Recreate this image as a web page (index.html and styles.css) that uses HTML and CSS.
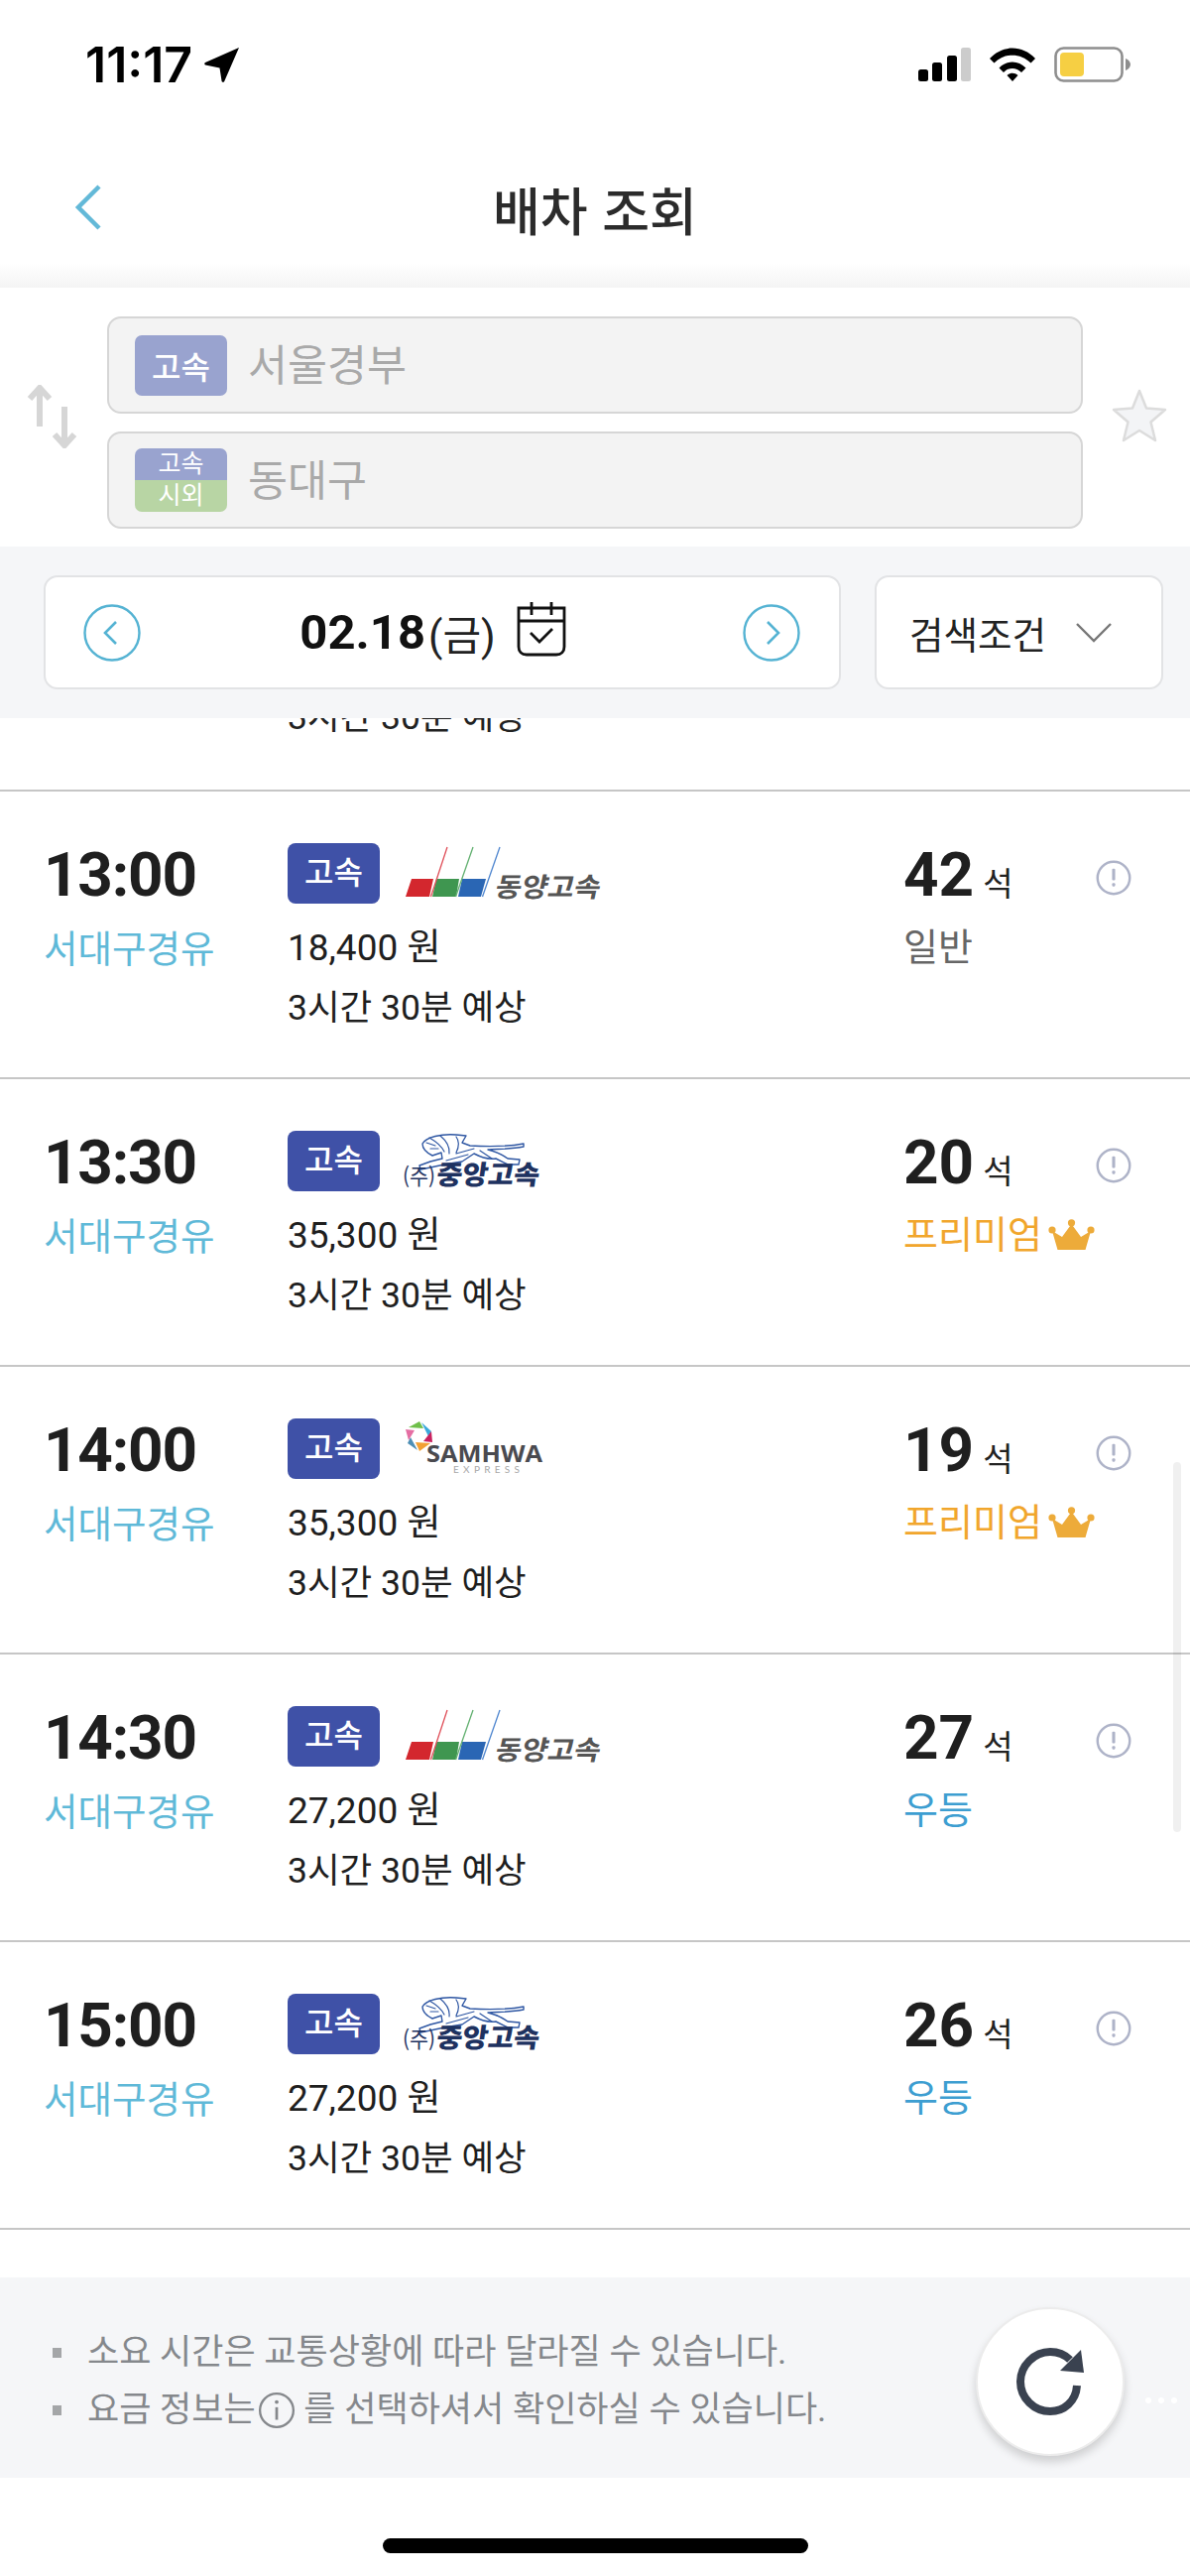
FILE: index.html
```html
<!DOCTYPE html>
<html lang="ko">
<head>
<meta charset="utf-8">
<title>배차 조회</title>
<link rel="stylesheet" href="styles.css">
</head>
<body>
<svg class="sprite" aria-hidden="true">
  <symbol id="logo-dongyang" viewBox="0 0 210 64">
    <polygon points="15,38 37,38 33,56 9,56" fill="#d3272e"/>
    <polygon points="40,38 63,38 60,56 36,56" fill="#3f9650"/>
    <polygon points="66,38 90,38 85,56 62,56" fill="#2a66b4"/>
    <line x1="51" y1="6" x2="34.5" y2="56" stroke="#e0505a" stroke-width="1.3"/>
    <line x1="77" y1="6" x2="59.5" y2="56" stroke="#62b070" stroke-width="1.3"/>
    <line x1="104" y1="6" x2="86.5" y2="56" stroke="#4f86cf" stroke-width="1.3"/>
    <text class="logo-dy" x="98" y="56" textLength="106" lengthAdjust="spacingAndGlyphs" transform="skewX(-12) translate(12 0)">동양고속</text>
  </symbol>
  <symbol id="logo-joongang" viewBox="0 0 210 64">
    <g fill="#fff" stroke="#2f57a3" stroke-width="1.4" stroke-linejoin="round" stroke-linecap="round">
      <path d="M26 15C30 8 45 5 60 6L70 7L66 14L74 17C92 18 112 18 128 15L128 18C114 21 100 20 92 21C100 23 108 27 112 30L124 31L123 36L112 36L100 30C90 31 84 28 78 25L66 33L48 36L34 39L24 41L23 37L34 33L46 30L45 24L36 27C30 24 26 20 26 15Z"/>
      <path d="M33 9C40 13 45 17 48 23M44 7C50 12 54 17 53 25M60 8C63 12 63 18 60 24M30 14L39 17M34 20L42 20M60 25L78 20M50 32L72 26M84 22L96 30" fill="none" stroke-width="1.2"/>
    </g>
    <text class="logo-ja-p" x="6" y="56" textLength="33" lengthAdjust="spacingAndGlyphs">(주)</text>
    <text class="logo-ja" x="39" y="56" textLength="104" lengthAdjust="spacingAndGlyphs" transform="skewX(-8) translate(8 0)">중앙고속</text>
  </symbol>
  <symbol id="logo-samhwa" viewBox="0 0 210 64">
    <polygon points="12,11 23,5 27,12" fill="#6fbf4a"/>
    <polygon points="25,6 35,15 32,20" fill="#3ba9dc"/>
    <polygon points="35,15 36,26 27,25" fill="#c9215f"/>
    <polygon points="34,27 23,35 19,26" fill="#f2a033"/>
    <polygon points="21,34 11,27 14,21" fill="#4d8fb5"/>
    <polygon points="9,13 18,14 12,24" fill="#e56ea3"/>
    <text class="logo-sh" x="30" y="46" textLength="117" lengthAdjust="spacingAndGlyphs">SAMHWA</text>
    <text class="logo-ex" x="57" y="57" textLength="67" lengthAdjust="spacing">EXPRESS</text>
  </symbol>
  <symbol id="icon-info" viewBox="0 0 35 35">
    <circle cx="17.5" cy="17.5" r="15.8" fill="none" stroke="#aeb3c8" stroke-width="2.4"/>
    <rect x="16" y="8.5" width="3" height="11.5" rx="1" fill="#aeb3c8"/>
    <rect x="16" y="22.5" width="3" height="3.4" rx="1" fill="#aeb3c8"/>
  </symbol>
  <symbol id="icon-crown" viewBox="0 0 47 32">
    <circle cx="4" cy="11" r="3.6" fill="#edab3a"/>
    <circle cx="23.500" cy="3.800" r="3.6" fill="#edab3a"/>
    <circle cx="43" cy="11" r="3.600" fill="#edab3a"/>
    <path d="M4 12L14 18L23.500 5L33 18L43 12L37.500 31H9.500Z" fill="#edab3a"/>
  </symbol>
</svg>

<header class="top">
  <div class="status">
    <div class="status-left">
      <span class="clock">11:17</span>
      <svg class="loc" viewBox="0 0 36 36"><path d="M35 1L20 35.500C19.500 36 18 36 17.600 35L15.500 21.500L1 18.500C0 18 0 16.500 1 16Z" fill="#000"/></svg>
    </div>
    <div class="status-right">
      <svg class="signal" viewBox="0 0 53 34">
        <rect x="0" y="22" width="10" height="12" rx="2.500" fill="#000"/>
        <rect x="14" y="15" width="10" height="19" rx="2.500" fill="#000"/>
        <rect x="29" y="8" width="10" height="26" rx="2.500" fill="#000"/>
        <rect x="43" y="0" width="10" height="34" rx="2.500" fill="#ccc"/>
      </svg>
      <svg class="wifi" viewBox="0 0 46 34">
        <path d="M0 11C13 -3 33 -3 46 11L41.500 15.500C31 5 15 5 4.500 15.500Z" fill="#000"/>
        <path d="M9.500 20.500C17 12.500 29 12.500 36.500 20.500L32 25C26.500 19.500 19.500 19.500 14 25Z" fill="#000"/>
        <path d="M17.500 28C20.500 25 25.500 25 28.500 28L23 34Z" fill="#000"/>
      </svg>
      <svg class="battery" viewBox="0 0 78 36">
        <rect x="1.500" y="1.500" width="67" height="33" rx="8" fill="#fff" stroke="#8e8e8e" stroke-width="2.600"/>
        <rect x="6" y="6" width="24" height="24" rx="4" fill="#f6cf43"/>
        <path d="M72 12C75 13 77 15.500 77 18C77 20.500 75 23 72 24Z" fill="#8e8e8e"/>
      </svg>
    </div>
  </div>
  <div class="nav">
    <svg class="back" viewBox="0 0 28 46"><path d="M25 2L4 23L25 44" fill="none" stroke="#63b9d8" stroke-width="4.500"/></svg>
    <h1 class="title">배차 조회</h1>
  </div>
</header>

<section class="route">
  <svg class="swap" viewBox="0 0 52 64">
    <g fill="none" stroke="#d6d6d6" stroke-width="6">
      <path d="M13 42V3M3 14L13 3L23 14"/>
      <path d="M38 22V61M28 50L38 61L48 50"/>
    </g>
  </svg>
  <div class="fields">
    <div class="field">
      <span class="mode mode-one">고속</span>
      <span class="place">서울경부</span>
    </div>
    <div class="field">
      <span class="mode mode-two"><span class="mode-top">고속</span><span class="mode-bottom">시외</span></span>
      <span class="place">동대구</span>
    </div>
  </div>
  <svg class="star" viewBox="0 0 56 54">
    <path d="M28 2L35 19.500L54 21L39.500 33.500L44 52L28 42L12 52L16.500 33.500L2 21L21 19.500Z" fill="#f3f4f6" stroke="#dcdcdc" stroke-width="2.500" stroke-linejoin="round"/>
  </svg>
</section>

<section class="datebar">
  <div class="datebox">
    <svg class="round" viewBox="0 0 58 58"><circle cx="29" cy="29" r="27.500" fill="#fff" stroke="#55b3d3" stroke-width="2.400"/><path d="M33 18L22 29L33 40" fill="none" stroke="#55b3d3" stroke-width="2.600"/></svg>
    <div class="date">
      <span class="date-num">02.18</span><span class="date-day">(금)</span>
      <svg class="cal" viewBox="0 0 50 56">
        <path d="M2 7H48V46C48 51 45 54 40 54H10C5 54 2 51 2 46Z" fill="none" stroke="#111" stroke-width="2.800"/>
        <path d="M2 20H48M15 1V14M35 1V14" fill="none" stroke="#111" stroke-width="2.800"/>
        <path d="M14 32L23 41L36 28" fill="none" stroke="#111" stroke-width="2.800"/>
      </svg>
    </div>
    <svg class="round" viewBox="0 0 58 58"><circle cx="29" cy="29" r="27.500" fill="#fff" stroke="#55b3d3" stroke-width="2.400"/><path d="M25 18L36 29L25 40" fill="none" stroke="#55b3d3" stroke-width="2.600"/></svg>
  </div>
  <div class="filter">
    <span>검색조건</span>
    <svg class="chev" viewBox="0 0 36 20"><path d="M1 1L18 18L35 1" fill="none" stroke="#777" stroke-width="2.400"/></svg>
  </div>
</section>

<main class="list">
  <div class="row-cut"><span class="cut-text">3시간 30분 예상</span></div>

  <article class="row">
    <div class="col-time"><div class="time">13:00</div><div class="via">서대구경유</div></div>
    <div class="col-info">
      <div class="brand"><span class="badge">고속</span><svg class="logo"><use href="#logo-dongyang"/></svg></div>
      <div class="line price">18,400 원</div>
      <div class="line">3시간 30분 예상</div>
    </div>
    <div class="col-seat">
      <div class="seats"><span class="count">42</span><span class="unit">석</span></div>
      <div class="grade grade-normal">일반</div>
    </div>
    <svg class="info"><use href="#icon-info"/></svg>
  </article>

  <article class="row">
    <div class="col-time"><div class="time">13:30</div><div class="via">서대구경유</div></div>
    <div class="col-info">
      <div class="brand"><span class="badge">고속</span><svg class="logo"><use href="#logo-joongang"/></svg></div>
      <div class="line price">35,300 원</div>
      <div class="line">3시간 30분 예상</div>
    </div>
    <div class="col-seat">
      <div class="seats"><span class="count">20</span><span class="unit">석</span></div>
      <div class="grade grade-premium">프리미엄<svg class="crown"><use href="#icon-crown"/></svg></div>
    </div>
    <svg class="info"><use href="#icon-info"/></svg>
  </article>

  <article class="row">
    <div class="col-time"><div class="time">14:00</div><div class="via">서대구경유</div></div>
    <div class="col-info">
      <div class="brand"><span class="badge">고속</span><svg class="logo"><use href="#logo-samhwa"/></svg></div>
      <div class="line price">35,300 원</div>
      <div class="line">3시간 30분 예상</div>
    </div>
    <div class="col-seat">
      <div class="seats"><span class="count">19</span><span class="unit">석</span></div>
      <div class="grade grade-premium">프리미엄<svg class="crown"><use href="#icon-crown"/></svg></div>
    </div>
    <svg class="info"><use href="#icon-info"/></svg>
  </article>

  <article class="row">
    <div class="col-time"><div class="time">14:30</div><div class="via">서대구경유</div></div>
    <div class="col-info">
      <div class="brand"><span class="badge">고속</span><svg class="logo"><use href="#logo-dongyang"/></svg></div>
      <div class="line price">27,200 원</div>
      <div class="line">3시간 30분 예상</div>
    </div>
    <div class="col-seat">
      <div class="seats"><span class="count">27</span><span class="unit">석</span></div>
      <div class="grade grade-plus">우등</div>
    </div>
    <svg class="info"><use href="#icon-info"/></svg>
  </article>

  <article class="row">
    <div class="col-time"><div class="time">15:00</div><div class="via">서대구경유</div></div>
    <div class="col-info">
      <div class="brand"><span class="badge">고속</span><svg class="logo"><use href="#logo-joongang"/></svg></div>
      <div class="line price">27,200 원</div>
      <div class="line">3시간 30분 예상</div>
    </div>
    <div class="col-seat">
      <div class="seats"><span class="count">26</span><span class="unit">석</span></div>
      <div class="grade grade-plus">우등</div>
    </div>
    <svg class="info"><use href="#icon-info"/></svg>
  </article>
  <div class="scrollbar"></div>
</main>

<footer class="notes">
  <ul class="note-list">
    <li>소요 시간은 교통상황에 따라 달라질 수 있습니다.</li>
    <li>요금 정보는<svg class="note-i" viewBox="0 0 36 36"><circle cx="18" cy="18" r="16" fill="none" stroke="#85888c" stroke-width="2.200"/><path d="M18 15V27" stroke="#85888c" stroke-width="2.600"/><circle cx="18" cy="10" r="1.800" fill="#85888c"/></svg> 를 선택하셔서 확인하실 수 있습니다.</li>
  </ul>
  <button class="refresh" aria-label="새로고침">
    <svg viewBox="0 0 70 70"><path d="M62 39C61 55 49 65 35 65C19 65 5 52 5 35C5 19 19 5 35 5C43 5 50 8 55 13" fill="none" stroke="#3a4250" stroke-width="8"/><path d="M66 3L69 26L45 24Z" fill="#3a4250"/></svg>
  </button>
  <div class="dots"><i></i><i></i><i></i></div>
</footer>

<div class="home"><span class="home-bar"></span></div>
</body>
</html>
```

FILE: styles.css
```css
* { box-sizing: border-box; }
html, body { margin: 0; padding: 0; }
body {
  width: 1200px;
  height: 2597px;
  overflow: hidden;
  background: #fff;
  color: #222;
  font-family: Roboto, "Noto Sans CJK KR", sans-serif;
}
.sprite { display: none; }

/* Header */
.top {
  height: 290px;
  background: linear-gradient(to bottom, #fff 265px, #f4f4f4 290px);
}
.status {
  height: 166px;
  padding: 38px 59px 0 86px;
  display: flex;
  justify-content: space-between;
  align-items: flex-start;
}
.status-left { display: flex; align-items: center; gap: 12px; }
.clock { font: 600 50px/54px Inter, Roboto, sans-serif; color: #000; }
.loc { width: 36px; height: 36px; }
.status-right { display: flex; align-items: center; gap: 19px; padding-top: 9px; }
.signal { width: 53px; height: 34px; }
.wifi { width: 46px; height: 34px; }
.battery { width: 78px; height: 36px; }
.nav { position: relative; height: 90px; display: flex; justify-content: center; align-items: center; }
.back { position: absolute; left: 75px; top: 20px; width: 28px; height: 46px; }
.title { margin: 0; font: 500 52px/70px "Noto Sans CJK KR", sans-serif; color: #2b2b2b; }

/* Route */
.route {
  height: 261px;
  display: flex;
  align-items: flex-start;
  padding: 29px 0 0 27px;
}
.swap { width: 52px; height: 64px; margin-top: 69px; flex: none; }
.fields { width: 984px; margin-left: 29px; display: flex; flex-direction: column; gap: 18px; flex: none; }
.field {
  height: 98px;
  display: flex;
  align-items: center;
  gap: 21px;
  padding-left: 26px;
  background: #f3f3f3;
  border: 2px solid #d6d6d6;
  border-radius: 14px;
}
.mode { display: flex; width: 93px; border-radius: 7px; overflow: hidden; color: #fff; flex: none; }
.mode-one { height: 61px; align-items: center; justify-content: center; background: #99a3cf; font-size: 32px; font-weight: 500; }
.mode-two { height: 64px; flex-direction: column; font-size: 25px; text-align: center; }
.mode-top { height: 32px; line-height: 32px; background: #99a3cf; }
.mode-bottom { height: 32px; line-height: 32px; background: #b8d5a4; }
.place { font-size: 43.5px; color: #a9a9a9; line-height: 50px; padding-top: 3px; }
.star { width: 56px; height: 54px; margin: 73px 0 0 29px; flex: none; }

/* Date */
.datebar {
  position: relative;
  z-index: 1;
  height: 173px;
  background: #f5f6f8;
  display: flex;
  gap: 34px;
  padding: 29px 30px 0 44px;
}
.datebox, .filter {
  height: 115px;
  background: #fff;
  border: 2px solid #e2e3e5;
  border-radius: 14px;
  display: flex;
  align-items: center;
  flex: none;
}
.datebox { width: 804px; padding: 0 39px 0 38px; justify-content: space-between; }
.round { width: 58px; height: 58px; flex: none; }
.date { display: flex; align-items: center; margin-right: 18px; }
.date-num { font-size: 49px; font-weight: 700; color: #111; }
.date-day { font-size: 42px; color: #222; margin-left: 3px; }
.cal { width: 50px; height: 56px; margin-left: 21px; margin-top: -8px; }
.filter { width: 291px; padding-left: 33px; gap: 30px; font-size: 37.5px; color: #222; font-family: "Noto Sans CJK KR", sans-serif; }
.chev { width: 36px; height: 20px; }

/* List */
.list { position: relative; height: 1523px; }
.row-cut { height: 74px; border-bottom: 2px solid #c6c6c6; padding-left: 290px; overflow: hidden; }
.cut-text { display: block; font-size: 35.5px; line-height: 44px; margin-top: -23px; color: #222; }
.row {
  height: 290px;
  border-bottom: 2px solid #c6c6c6;
  padding: 52px 0 0 44px;
  display: flex;
  align-items: flex-start;
}
.col-time { width: 246px; }
.time { font-size: 62px; font-weight: 700; line-height: 62px; letter-spacing: -1.2px; color: #1f1f1f; margin: 1px 0 19px; }
.via { font-size: 37.5px; line-height: 50px; color: #5fb9d8; }
.col-info { width: 621px; }
.brand { display: flex; align-items: flex-start; height: 61px; margin-bottom: 14px; }
.badge {
  width: 93px;
  height: 61px;
  background: #3f51a7;
  border-radius: 8px;
  color: #fff;
  font-size: 32px;
  font-weight: 500;
  line-height: 61px;
  text-align: center;
}
.logo { width: 210px; height: 64px; margin: -2px 0 0 17px; }
.line { font-size: 35.5px; line-height: 60px; color: #1f1f1f; }
.price { font-size: 37px; line-height: 61px; }
.col-seat { width: 193px; }
.seats { display: flex; align-items: baseline; height: 60px; }
.count { font-size: 62px; font-weight: 700; line-height: 64px; color: #1f1f1f; }
.unit { font-size: 33px; color: #222; margin-left: 9px; }
.grade { font-size: 38px; line-height: 50px; margin-top: 20px; display: flex; align-items: center; white-space: nowrap; }
.grade-normal { color: #666; }
.grade-premium { color: #f1a62c; }
.grade-plus { color: #3d9ed1; }
.crown { width: 47px; height: 32px; margin-left: 6px; flex: none; }
.info { width: 36px; height: 36px; margin: 17px 0 0 1px; flex: none; }
.scrollbar {
  position: absolute;
  left: 1183px;
  top: 750px;
  width: 8px;
  height: 373px;
  border-radius: 4px;
  background: rgba(0, 0, 0, 0.06);
}

/* Notes */
.notes { position: relative; height: 202px; margin-top: 49px; background: #f5f6f8; }
.note-list { list-style: none; margin: 0; padding: 47px 0 0 53px; }
.note-list li {
  position: relative;
  padding-left: 35px;
  height: 58px;
  font-size: 35px;
  line-height: 58px;
  color: #85888c;
  display: flex;
  align-items: center;
  white-space: pre;
}
.note-list li::before {
  content: "";
  position: absolute;
  left: 0;
  top: 24px;
  width: 9px;
  height: 10px;
  background: #a4a6a8;
}
.note-i { width: 38px; height: 38px; margin: 0 0 0 2px; }
.refresh {
  position: absolute;
  left: 984px;
  top: 30px;
  width: 150px;
  height: 150px;
  padding: 0;
  border: 2px solid #ececec;
  border-radius: 50%;
  background: #fff;
  box-shadow: 0 6px 10px rgba(0, 0, 0, 0.16);
  display: flex;
  align-items: center;
  justify-content: center;
}
.refresh svg { width: 70px; height: 70px; }
.dots { position: absolute; left: 1155px; top: 121px; display: flex; gap: 7px; }
.dots i { width: 6px; height: 6px; border-radius: 50%; background: #fff; }

/* Home */
.home { height: 99px; display: flex; justify-content: center; padding-top: 61px; }
.home-bar { width: 429px; height: 15px; background: #000; border-radius: 8px; }

/* SVG text */
.logo-dy { font: 700 27px "Noto Sans CJK KR", sans-serif; fill: #555; }
.logo-ja { font: 900 27px "Noto Sans CJK KR", sans-serif; fill: #1e3260; }
.logo-ja-p { font: 400 22px "Noto Sans CJK KR", sans-serif; fill: #1e3260; }
.logo-sh { font: 700 23px "Open Sans", sans-serif; fill: #4a4a4f; }
.logo-ex { font: 400 10px Lato, sans-serif; fill: #a8a8a8; }
```
